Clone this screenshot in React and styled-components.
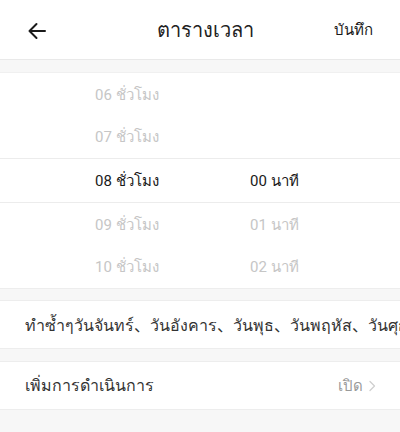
import React from "react";
import styled, { createGlobalStyle } from "styled-components";

const GlobalStyle = createGlobalStyle`
  html, body {
    margin: 0;
    padding: 0;
    background: #f7f7f7;
    font-family: Roboto, "Noto Sans", "Noto Sans CJK SC", sans-serif;
  }
`;

const hours = ["06", "07", "08", "09", "10"];
const minutes = [null, null, "00", "01", "02"];

function App() {
    return (
        <Page>
            <GlobalStyle/>
            <Header>
                <BackButton>
                    <svg width="20" height="18" viewBox="0 0 20 18" fill="none">
                        <path d="M18 9H2.5M9.5 2L2.5 9L9.5 16" stroke="#1a1a1a" strokeWidth="2" strokeLinecap="round" strokeLinejoin="round"/>
                    </svg>
                </BackButton>
                <Title>ตารางเวลา</Title>
                <SaveButton>บันทึก</SaveButton>
            </Header>

            <Picker>
                {hours.map((h, i) => (
                    <PickerRow key={h} $selected={i === 2}>
                        <HourCell $selected={i === 2}>{h} ชั่วโมง</HourCell>
                        <MinuteCell $selected={i === 2}>{minutes[i] ? `${minutes[i]} นาที` : ""}</MinuteCell>
                    </PickerRow>
                ))}
            </Picker>

            <Section $gap={11}>
                <RepeatText>ทำซ้ำๆวันจันทร์、วันอังคาร、วันพุธ、วันพฤหัส、วันศุกร์</RepeatText>
            </Section>

            <Section $gap={12}>
                <Label>เพิ่มการดำเนินการ</Label>
                <Value>
                    เปิด
                    <svg width="8" height="12" viewBox="0 0 8 12" fill="none">
                        <path d="M2 1.5L6.5 6L2 10.5" stroke="#cfcfcf" strokeWidth="1.3" strokeLinecap="round" strokeLinejoin="round"/>
                    </svg>
                </Value>
            </Section>
        </Page>
    )
}

const Page = styled.div`
    width: 400px;
    height: 432px;
    overflow: hidden;
    background: #f7f7f7;
`;

const Header = styled.div`
    height: 59px;
    background: #fff;
    border-bottom: 1px solid #e9e9e9;
    display: flex;
    align-items: center;
    padding: 0 27px;
`;

const BackButton = styled.div`
    width: 20px;
    height: 18px;
    display: flex;
    margin-top: 2px;
`;

const Title = styled.div`
    flex: 1;
    text-align: center;
    font-size: 20px;
    color: #222;
    padding-left: 30px;
`;

const SaveButton = styled.div`
    font-size: 15px;
    color: #1a1a1a;
`;

const Picker = styled.div`
    margin-top: 12px;
    background: #fff;
    border-top: 1px solid #f0f0f0;
    border-bottom: 1px solid #ededed;
`;

const PickerRow = styled.div`
    height: 43px;
    display: grid;
    grid-template-columns: 155px 1fr;
    align-items: center;
    padding-left: 95px;
    border-top: ${p => p.$selected ? "1px solid #ececec" : "none"};
    border-bottom: ${p => p.$selected ? "1px solid #ececec" : "none"};

    &:nth-child(2), &:nth-child(5) {
        height: 42px;
    }
`;

const HourCell = styled.div`
    font-size: 15px;
    color: ${p => p.$selected ? "#1a1a1a" : "#c6c6c6"};
`;

const MinuteCell = styled(HourCell)``;

const Section = styled.div`
    margin-top: ${p => p.$gap}px;
    height: 47px;
    background: #fff;
    border-top: 1px solid #ededed;
    border-bottom: 1px solid #ededed;
    display: flex;
    align-items: center;
    padding: 0 24px 0 25px;
    overflow: hidden;
`;

const RepeatText = styled.div`
    font-size: 16px;
    color: #333;
    white-space: nowrap;
`;

const Label = styled.div`
    flex: 1;
    font-size: 16px;
    color: #333;
`;

const Value = styled.div`
    display: flex;
    align-items: center;
    gap: 5px;
    font-size: 15px;
    color: #9a9a9a;
`;

export default App;
